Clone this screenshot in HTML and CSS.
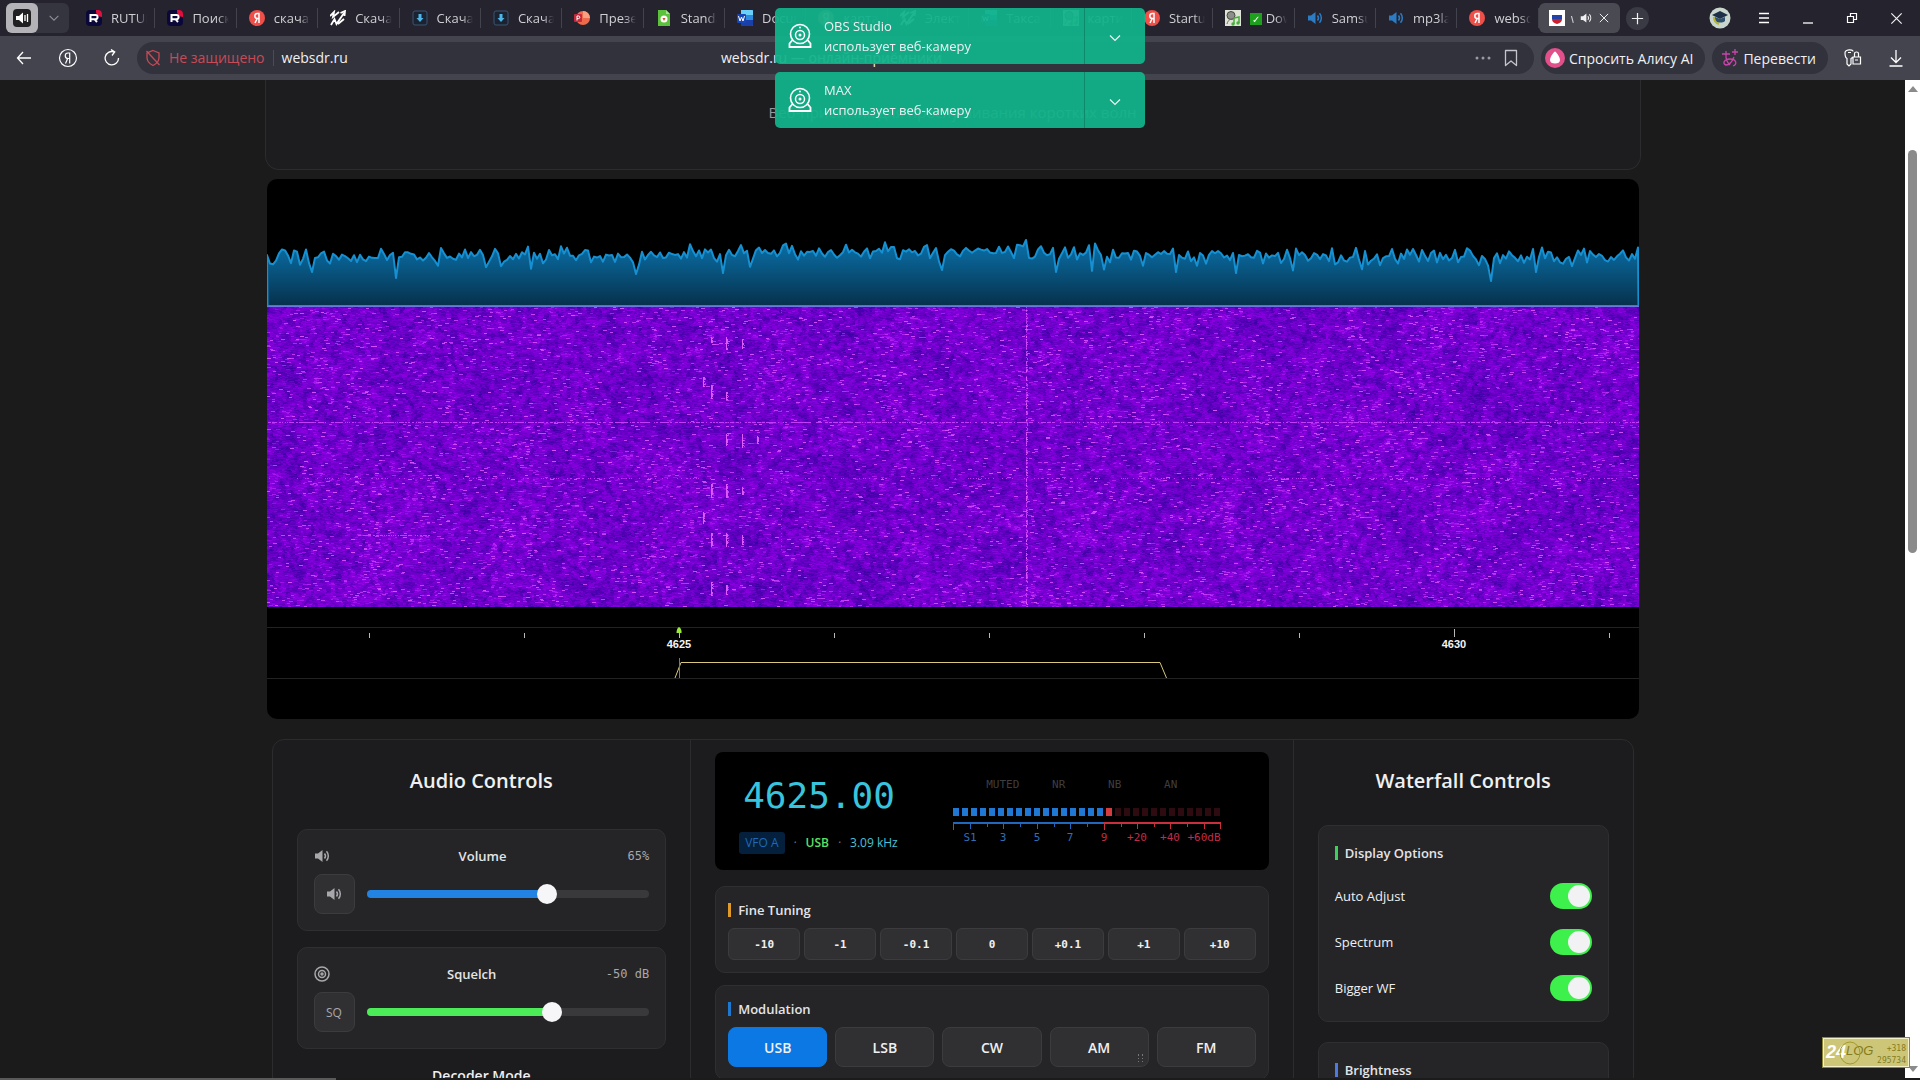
FILE: index.html
```html
<!DOCTYPE html>
<html lang="ru">
    <head>
        <meta charset="utf-8" />
        <meta name="viewport" content="width=device-width, initial-scale=1" />
        <title>websdr.ru</title>
        <link rel="stylesheet" href="styles.css">
    </head>
    <body>
        <svg class="sprite" aria-hidden="true">
            <symbol id="i-rutube" viewBox="0 0 16 16"><rect width="16" height="16" rx="4" fill="#0a0838" /><path d="M10 0h2a4 4 0 0 1 4 4v3a6 6 0 0 1-6-7z" fill="#e0103c" /><path d="M4.5 12V5h5a2 2 0 0 1 0 4.200h-5M8.500 9.200L11 12" fill="none" stroke="#fff" stroke-width="2" /></symbol>
            <symbol id="i-ya" viewBox="0 0 16 16"><circle cx="8" cy="8" r="8" fill="#ee4f48" /><path d="M10 13V3.500H8.300a2.500 2.500 0 0 0 0 5H10M8.200 8.500L6 13" fill="none" stroke="#fff" stroke-width="1.500" /></symbol>
            <symbol id="i-zig" viewBox="0 0 16 16"><path d="M0 6l4-4-1 5 6-5M1 15l3.500-6 2 5L14 3M10.500 3L15 1l-.5 5M8 14l6-5" fill="none" stroke="#fff" stroke-width="1.800" /></symbol>
            <symbol id="i-dl" viewBox="0 0 16 16"><rect x="1" y="1" width="14" height="14" rx="2" fill="#1b2330" stroke="#3a5474" /><path d="M8 4v5" stroke="#4fb4e6" stroke-width="3" /><path d="M4.500 8h7L8 12z" fill="#4fb4e6" /></symbol>
            <symbol id="i-ppt" viewBox="0 0 16 16"><circle cx="9" cy="8" r="7" fill="#ee6a4a" /><path d="M9 1a7 7 0 0 1 7 7H9z" fill="#f7a184" /><rect y="4" width="8" height="8" rx="1" fill="#c22a3c" /><path d="M3 10.500V6h1.500a1.300 1.300 0 0 1 0 2.600H3" fill="none" stroke="#fff" /></symbol>
            <symbol id="i-sheet" viewBox="0 0 16 16"><path d="M2 0h8l4 4v12H2z" fill="#5cc23c" /><path d="M10 0l4 4h-4z" fill="#a8e293" /><circle cx="8" cy="9" r="3.500" fill="#fff" /><path d="M6.500 8h3L8 11z" fill="#d0502c" /></symbol>
            <symbol id="i-word" viewBox="0 0 16 16"><rect x="4" y="0" width="12" height="16" rx="1" fill="#2c8be0" /><path d="M4 0h11a1 1 0 0 1 1 1v4H4z" fill="#6ad0f8" /><path d="M4 10h12v5a1 1 0 0 1-1 1H4z" fill="#1b3fa8" /><rect y="4" width="9" height="9" rx="1" fill="#1746b8" /><path d="M1.500 6l1.500 5 1.500-4L6 11l1.500-5" fill="none" stroke="#fff" /></symbol>
            <symbol id="i-img" viewBox="0 0 16 16"><path d="M0 0h16v16H0z" fill="#dfe3d8" /><circle cx="6" cy="5.500" r="4" fill="#8c9088" stroke="#44483f" /><path d="M2 14c1-4 3-5 6-5" fill="none" stroke="#6c7068" /><path d="M9 14V8l5-1v6" fill="none" stroke="#46b03a" stroke-width="1.500" /><circle cx="8" cy="14" r="1.700" fill="#46b03a" /><circle cx="13" cy="13" r="1.700" fill="#46b03a" /></symbol>
            <symbol id="i-snd" viewBox="0 0 16 16"><path d="M1 5.500h3L8.500 2v12L4 10.500H1z" fill="currentColor" /><path d="M10.500 5.500a4 4 0 0 1 0 5M12.500 3.300a7 7 0 0 1 0 9.400" fill="none" stroke="currentColor" stroke-width="1.500" /></symbol>
            <symbol id="i-flag" viewBox="0 0 16 16"><path d="M0 0h16v16H0z" fill="#fff" /><path d="M3 5h10v4H3z" fill="#2343a8" /><path d="M3 9h10c0 3-2 4-5 5-3-1-5-2-5-5z" fill="#c8202c" /></symbol>
            <symbol id="i-down" viewBox="0 0 16 16"><path d="M3 5.500l5 5 5-5" fill="none" stroke="currentColor" stroke-width="1.200" /></symbol>
            <symbol id="i-close" viewBox="0 0 16 16"><path d="M2.500 2.500l11 11m0-11l-11 11" fill="none" stroke="currentColor" stroke-width="1.300" /></symbol>
            <symbol id="i-plus" viewBox="0 0 16 16"><path d="M8 2v12M2 8h12" stroke="currentColor" stroke-width="1.300" /></symbol>
            <symbol id="i-cam" viewBox="0 0 24 26"><circle cx="12" cy="11" r="9.500" fill="none" stroke="#fff" stroke-width="1.600" /><circle cx="12" cy="12" r="4.500" fill="none" stroke="#fff" stroke-width="1.500" /><circle cx="12" cy="12" r="1.500" fill="#fff" /><circle cx="12" cy="4.500" r="1" fill="#fff" /><path d="M4.500 17L1.500 20.500V24h21v-3.500L19.500 17" fill="none" stroke="#fff" stroke-width="1.800" /></symbol>
        </svg>

        <header class="browser">
            <div class="tabbar">
                <div class="sound-group">
                    <button class="sound-btn" aria-label="Звук"><svg width="18" height="18" viewBox="0 0 18 18"><rect width="18" height="18" rx="4" fill="#202022" /><path d="M3 7h3l4-3.500v11L6 11H3z" fill="#fff" /><path d="M12 6v6M14.500 5v8" stroke="#fff" stroke-width="1.300" /></svg></button>
                    <button class="sound-more" aria-label="Список вкладок"><svg width="14" height="14"><use href="#i-down" /></svg></button>
                </div>
                <nav class="tabs">
                    <a class="tab" href="#"><svg><use href="#i-rutube" /></svg><span>RUTUBE</span></a>
                    <a class="tab" href="#"><svg><use href="#i-rutube" /></svg><span>Поиск ви</span></a>
                    <a class="tab" href="#"><svg><use href="#i-ya" /></svg><span>скачать</span></a>
                    <a class="tab" href="#"><svg><use href="#i-zig" /></svg><span>Скачать</span></a>
                    <a class="tab" href="#"><svg><use href="#i-dl" /></svg><span>Скачать</span></a>
                    <a class="tab" href="#"><svg><use href="#i-dl" /></svg><span>Скачать</span></a>
                    <a class="tab" href="#"><svg><use href="#i-ppt" /></svg><span>Презента</span></a>
                    <a class="tab" href="#"><svg><use href="#i-sheet" /></svg><span>Standard</span></a>
                    <a class="tab" href="#"><svg><use href="#i-word" /></svg><span>Docume</span></a>
                    <a class="tab" href="#"><svg><use href="#i-ya" /></svg><span>карта</span></a>
                    <a class="tab" href="#"><svg><use href="#i-zig" /></svg><span>Элект</span></a>
                    <a class="tab" href="#"><svg><use href="#i-word" /></svg><span>Такса</span></a>
                    <a class="tab" href="#"><svg><use href="#i-img" /></svg><span>карти</span></a>
                    <a class="tab" href="#"><svg><use href="#i-ya" /></svg><span>Startup</span></a>
                    <a class="tab" href="#"><svg><use href="#i-img" /></svg><span><i class="tick">✓</i> Downl</span></a>
                    <a class="tab blue" href="#"><svg><use href="#i-snd" /></svg><span>Samsung</span></a>
                    <a class="tab blue" href="#"><svg><use href="#i-snd" /></svg><span>mp3lame</span></a>
                    <a class="tab" href="#"><svg><use href="#i-ya" /></svg><span>websdr</span></a>
                    <a class="tab active" href="#"><svg><use href="#i-flag" /></svg><span>w</span><svg class="small"><use href="#i-snd" /></svg><svg class="small"><use href="#i-close" /></svg></a>
                </nav>
                <button class="new-tab" aria-label="Новая вкладка"><svg width="15" height="15"><use href="#i-plus" /></svg></button>
                <div class="window-btns">
                    <button aria-label="Профиль"><svg width="22" height="22" viewBox="0 0 22 22"><circle cx="11" cy="11" r="10.500" fill="#c9d6cd" /><path d="M3 8l8-4 8 4-8 4z" fill="#1d3048" /><path d="M6 10v4c2 2 8 2 10 0v-4l-5 2z" fill="#31506c" /><path d="M5 10c0 4 2 6 5 7" fill="none" stroke="#b4b62c" stroke-width="2" /></svg></button>
                    <button aria-label="Меню"><svg width="14" height="14" viewBox="0 0 14 14"><path d="M2 2.500h10M2 7h10M2 11.500h10" stroke="#fff" stroke-width="1.300" /></svg></button>
                    <button aria-label="Свернуть"><svg width="14" height="14" viewBox="0 0 14 14"><path d="M2 12h10" stroke="#fff" stroke-width="1.300" /></svg></button>
                    <button aria-label="Окно"><svg width="14" height="14" viewBox="0 0 14 14"><path d="M2.500 5.500h6v6h-6zM5.500 5.500v-3h6v6h-3" fill="none" stroke="#fff" stroke-width="1.200" /></svg></button>
                    <button aria-label="Закрыть"><svg width="15" height="15"><use href="#i-close" /></svg></button>
                </div>
            </div>
            <div class="toolbar">
                <div class="nav-btns">
                    <button aria-label="Назад"><svg width="18" height="18" viewBox="0 0 18 18"><path d="M16 9H3M8 3L2.500 9 8 15" fill="none" stroke="#fff" stroke-width="1.300" /></svg></button>
                    <button aria-label="Яндекс"><svg width="20" height="20" viewBox="0 0 20 20"><circle cx="10" cy="10" r="8.500" fill="none" stroke="#fff" stroke-width="1.200" /><path d="M11.700 15.500V5H10a2.600 2.600 0 0 0 0 5.500h1.700M9.700 10.500L7.500 15.500" fill="none" stroke="#fff" stroke-width="1.200" /></svg></button>
                    <button aria-label="Обновить"><svg width="18" height="18" viewBox="0 0 18 18"><path d="M15.500 9A6.700 6.700 0 1 1 11 2.900M8 .5l3.700 2.400L9 6.500" fill="none" stroke="#fff" stroke-width="1.300" /></svg></button>
                </div>
                <div class="address">
                    <div class="address-left">
                        <svg width="16" height="18" viewBox="0 0 16 18"><path d="M8 1.500l6 2.500v4.500c0 4-3 6.500-6 8-3-1.500-6-4-6-8V4zM1.500 2l13 14" fill="none" stroke="#c74a57" stroke-width="1.300" /></svg>
                        <span class="unsafe">Не защищено</span>
                        <span class="host">websdr.ru</span>
                    </div>
                    <span class="page-title">websdr.ru — онлайн-приёмники</span>
                    <div class="address-right">
                        <svg width="18" height="18" viewBox="0 0 18 18" fill="#9a9aa4"><circle cx="3" cy="9" r="1.500" /><circle cx="9" cy="9" r="1.500" /><circle cx="15" cy="9" r="1.500" /></svg>
                        <svg width="14" height="18" viewBox="0 0 14 18"><path d="M1.500 1.500h11v15L7 12l-5.500 4.500z" fill="none" stroke="#c4c4cb" stroke-width="1.300" stroke-linejoin="round" /></svg>
                    </div>
                </div>
                <button class="pill"><svg width="20" height="20" viewBox="0 0 20 20"><circle cx="10" cy="10" r="10" fill="#e2508c" /><path d="M10 3.500c2 1 5 6 5 8.500 0 2.500-2 3.500-5 3.500S5 14.500 5 12c0-2.500 3-7.500 5-8.500z" fill="#fff" /></svg>Спросить Алису AI</button>
                <button class="pill"><svg width="18" height="18" viewBox="0 0 18 18" fill="none" stroke="#c845a8" stroke-width="1.300"><path d="M1 5h8M5 2v6c0 4 2 6 4 8M13 8c-2 5-5 8-8 8-4-1-2-6 4-6s8 5 3 7M14 0v6M11 3h6" /></svg>Перевести</button>
                <div class="tool-btns">
                    <button aria-label="Пароли"><svg width="20" height="20" viewBox="0 0 20 20" fill="none" stroke="#fff" stroke-width="1.200"><path d="M9.500 9.500L8 10.500V16l-2 2-2-2v-5.500C2 9.500 2 7 2 5c0-4 8-4 8-1.500M5 4.500h3M11.500 9V5.500c0-2 4-2 4 0V9M10 9h7.500v7H10zM12 12h3" /></svg></button>
                    <button aria-label="Загрузки"><svg width="18" height="20" viewBox="0 0 18 20"><path d="M9 2v12M4 9.500L9 14.500 14 9.500M2.500 18h13" fill="none" stroke="#fff" stroke-width="1.300" /></svg></button>
                </div>
            </div>
        </header>

        <div class="viewport">
            <main>
                <section class="intro"><p>Веб-приёмник для прослушивания коротких волн</p></section>

                <section class="radio">
                    <canvas id="spectrum" class="spectrum"></canvas>
                    <canvas id="waterfall" class="waterfall"></canvas>
                    <svg class="scale" viewBox="0 0 1372 112">
                        <path d="M0 20.500h1372M0 71.500h1372" stroke="#222" />
                        <path d="M102.500 26v5M257.500 26v5M567.500 26v5M722.500 26v5M877.500 26v5M1032.500 26v5M1187.500 22v8M1342.500 26v5" stroke="#b8b8b8" />
                        <path d="M412 20c2 1 3 4 2.500 6H413v5h-1v-5h-2.500c0-2 .5-5 2.500-6z" fill="#9be83c" />
                        <text x="412" y="41">4625</text>
                        <text x="1187" y="41">4630</text>
                        <path d="M408 71l6-15.500h479l6.500 15.500" fill="none" stroke="#d8c878" />
                        <path d="M412.500 51v20" stroke="#8c7c28" />
                    </svg>
                </section>

                <section class="controls">
                    <div class="col audio">
                        <h2>Audio Controls</h2>
                        <div class="card slider-card">
                            <div class="card-head"><svg width="16" height="16"><use href="#i-snd" /></svg><label for="volume">Volume</label><output>65%</output></div>
                            <div class="slider-row">
                                <button class="square" aria-label="Mute"><svg width="16" height="16"><use href="#i-snd" /></svg></button>
                                <input type="range" id="volume" class="range-blue" min="0" max="100" value="65" style="--fill: 65%" />
                            </div>
                        </div>
                        <div class="card slider-card">
                            <div class="card-head"><svg width="16" height="16" viewBox="0 0 16 16" fill="none" stroke="currentColor" stroke-width="1.500"><circle cx="8" cy="8" r="7" /><circle cx="8" cy="8" r="3.500" /><circle cx="8" cy="8" r="1" /></svg><label for="squelch">Squelch</label><output>-50 dB</output></div>
                            <div class="slider-row">
                                <button class="square">SQ</button>
                                <input type="range" id="squelch" class="range-green" min="-150" max="0" value="-50" style="--fill: 67%" />
                            </div>
                        </div>
                        <h3 class="decoder">Decoder Mode</h3>
                    </div>

                    <div class="col tuner">
                        <div class="display">
                            <div>
                                <div class="freq">4625.00</div>
                                <div class="vfo"><span class="vfo-a">VFO A</span><i>·</i><span class="mode">USB</span><i>·</i><span class="bandwidth">3.09 kHz</span></div>
                            </div>
                            <div class="meter">
                                <div class="flags"><span>MUTED</span><span>NR</span><span>NB</span><span>AN</span></div>
                                <div class="bars" id="bars"></div>
                                <svg class="meter-scale" width="280" height="30" viewBox="0 0 280 30">
                                    <path d="M0 1h151M.5 1v7M17.500 1v6M34.500 1v4M50.500 1v6M67.500 1v4M84.500 1v6M101.500 1v4M117.500 1v6M134.500 1v4" stroke="#1f68bc" fill="none" />
                                    <path d="M151 1h117M151.500 1v7M168.500 1v4M184.500 1v6M201.500 1v4M217.500 1v6M234.500 1v4M251.500 1v6M267.500 1v6" stroke="#c8303e" fill="none" />
                                    <path d="M0 1h151" stroke="#1f68bc" stroke-width="2" />
                                    <path d="M151 1h117" stroke="#c8303e" stroke-width="2" />
                                    <g class="s-blue"><text x="17" y="19">S1</text><text x="50" y="19">3</text><text x="84" y="19">5</text><text x="117" y="19">7</text></g>
                                    <g class="s-red"><text x="151" y="19">9</text><text x="184" y="19">+20</text><text x="217" y="19">+40</text><text x="251" y="19">+60dB</text></g>
                                </svg>
                            </div>
                        </div>
                        <div class="card tuning">
                            <h3 class="bar-orange">Fine Tuning</h3>
                            <div class="steps">
                                <button>-10</button>
                                <button>-1</button>
                                <button>-0.1</button>
                                <button>0</button>
                                <button>+0.1</button>
                                <button>+1</button>
                                <button>+10</button>
                            </div>
                        </div>
                        <div class="card tuning">
                            <h3 class="bar-blue">Modulation</h3>
                            <div class="modes">
                                <button class="selected">USB</button>
                                <button>LSB</button>
                                <button>CW</button>
                                <button>AM<svg class="grip" width="6" height="9" viewBox="0 0 6 9" fill="#77777b"><path d="M0 0h1v2H0zM4 0h1v2H4zM0 4h1v1H0zM4 4h1v1H4zM0 7h1v1H0zM4 7h1v1H4z" /></svg></button>
                                <button>FM</button>
                            </div>
                        </div>
                    </div>

                    <div class="col wf">
                        <h2>Waterfall Controls</h2>
                        <div class="card options">
                            <h3 class="bar-green">Display Options</h3>
                            <label class="option">Auto Adjust<input type="checkbox" checked /></label>
                            <label class="option">Spectrum<input type="checkbox" checked /></label>
                            <label class="option">Bigger WF<input type="checkbox" checked /></label>
                        </div>
                        <div class="card options">
                            <h3 class="bar-indigo">Brightness</h3>
                        </div>
                    </div>
                </section>
            </main>
            <div class="scrollbar">
                <svg width="10" height="6"><path d="M0 6l5-6 5 6z" fill="#8b8b8b" /></svg>
                <div class="thumb-track"><div class="thumb"></div></div>
                <svg width="10" height="6"><path d="M0 0l5 6 5-6z" fill="#8b8b8b" /></svg>
            </div>
        </div>
        <footer class="edge"></footer>

        <div class="toasts">
            <div class="toast">
                <svg width="24" height="26"><use href="#i-cam" /></svg>
                <p>OBS Studio<br />использует веб-камеру</p>
                <button aria-label="Подробнее"><svg width="16" height="16"><use href="#i-down" /></svg></button>
            </div>
            <div class="toast">
                <svg width="24" height="26"><use href="#i-cam" /></svg>
                <p>MAX<br />использует веб-камеру</p>
                <button aria-label="Подробнее"><svg width="16" height="16"><use href="#i-down" /></svg></button>
            </div>
        </div>

        <a class="counter" href="#">
            <svg width="30" height="26" viewBox="0 0 30 26"><ellipse cx="15" cy="13" rx="10" ry="11" fill="none" stroke="#a39a2c" /></svg>
            <b>24</b><em>LOG</em>
            <span>+318<br />295734</span>
        </a>

        <script src="waterfall.js"></script>
    </body>
</html>
```

FILE: styles.css
```css
* {
    box-sizing: border-box;
}
body {
    margin: 0;
    height: 100vh;
    display: flex;
    flex-direction: column;
    overflow: hidden;
    background: #1b1b1b;
    color: #f0f0f2;
    font: 13px "Open Sans", "Noto Sans", sans-serif;
}
button {
    font: inherit;
    color: inherit;
    background: none;
    border: 0;
    padding: 0;
    display: flex;
    align-items: center;
    justify-content: center;
}
a {
    color: inherit;
    text-decoration: none;
}
h2,
h3,
p {
    margin: 0;
}
svg {
    flex: none;
}
.sprite {
    display: none;
}

/* browser chrome */
.browser {
    background: #44444e;
}
.tabbar {
    display: flex;
    align-items: center;
    height: 36px;
    padding: 0 12px 0 6px;
    background: #24232e;
}
.sound-group {
    display: flex;
    width: 63px;
    height: 30px;
    margin-right: 5px;
    border-radius: 6px;
    background: #353540;
}
.sound-btn {
    width: 32px;
    border-radius: 6px;
    background: #b4b4b8;
}
.sound-more {
    flex: 1;
    color: #8f8f98;
}
.tabs {
    display: flex;
    flex: 1;
    max-width: 1546px;
}
.tab {
    flex: 1;
    min-width: 0;
    height: 30px;
    display: flex;
    align-items: center;
    gap: 9px;
    padding: 0 8px 0 12px;
    color: #cfcfd4;
}
.tab svg {
    width: 16px;
    height: 16px;
}
.tab span {
    flex: 1;
    overflow: hidden;
    white-space: nowrap;
    mask-image: linear-gradient(to right, #000 70%, transparent);
}
.tab:not(.active) {
    background: linear-gradient(#43434d, #43434d) right center / 1px 20px no-repeat;
}
.tab.blue svg {
    color: #2c7cc4;
}
.tab.active {
    background: #4a4a52;
    border-radius: 6px;
    gap: 6px;
    padding: 0 10px;
}
.tab.active .small {
    width: 12px;
    height: 12px;
    color: #f0f0f2;
}
.tick {
    display: inline-block;
    width: 12px;
    line-height: 12px;
    background: #1ea01e;
    color: #fff;
    font-size: 10px;
    font-style: normal;
    text-align: center;
}
.new-tab {
    width: 23px;
    height: 23px;
    margin-left: 6px;
    border-radius: 50%;
    background: #3a3a44;
}
.window-btns {
    display: flex;
    margin-left: auto;
}
.window-btns button {
    width: 24px;
    margin-left: 20px;
}
.toolbar {
    display: flex;
    align-items: center;
    gap: 7px;
    height: 44px;
    padding-right: 15px;
}
.nav-btns {
    display: flex;
    gap: 24px;
    padding: 0 8px 0 14px;
}
.nav-btns button {
    width: 20px;
}
.address {
    flex: 1;
    display: grid;
    grid-template-columns: 1fr auto 1fr;
    align-items: center;
    height: 32px;
    padding: 0 16px 0 8px;
    border-radius: 16px;
    background: #32323c;
    font-size: 14px;
    line-height: 20px;
}
.address-left,
.address-right {
    display: flex;
    align-items: center;
    gap: 8px;
}
.address-right {
    justify-content: flex-end;
    gap: 12px;
}
.unsafe {
    color: #c74a57;
    padding-right: 8px;
    border-right: 1px solid #4c4c56;
    line-height: 16px;
}
.pill {
    gap: 4px;
    height: 32px;
    padding: 0 12px 0 4px;
    border-radius: 16px;
    background: #32323c;
    font-size: 14px;
}
.pill + .pill {
    padding-left: 9px;
}
.tool-btns {
    display: flex;
    gap: 24px;
    padding-left: 8px;
}

/* page */
.viewport {
    flex: 1;
    min-height: 0;
    display: flex;
}
main {
    flex: 1;
    overflow: hidden;
}
.intro,
.radio,
.controls {
    margin: 0 auto;
}
.intro {
    max-width: 1376px;
    height: 90px;
    padding-top: 22px;
    border: 1px solid #2c2c2e;
    border-top: 0;
    border-radius: 0 0 14px 14px;
    background: #1d1d1f;
    color: #98989d;
    font-size: 15px;
    line-height: 20px;
    text-align: center;
}
.radio {
    max-width: 1372px;
    margin-top: 9px;
    border-radius: 10px;
    overflow: hidden;
    background: #000;
}
.radio > * {
    display: block;
    width: 100%;
}
.spectrum {
    height: 128px;
}
.waterfall {
    height: 300px;
}
.scale {
    font: bold 11px "Liberation Sans", Arial, sans-serif;
    fill: #f4f4f4;
    text-anchor: middle;
}
.controls {
    max-width: 1362px;
    display: grid;
    grid-template-columns: 418fr 603fr 340fr;
    margin-top: 20px;
    border: 1px solid #2c2c2e;
    border-radius: 12px 12px 0 0;
    background: #1c1c1e;
}
.col {
    min-width: 0;
    padding: 24px;
}
.col + .col {
    border-left: 1px solid #2c2c2e;
}
.col h2 {
    margin-bottom: 27px;
    font-size: 20px;
    font-weight: 600;
    line-height: 34px;
    text-align: center;
}
.card {
    border: 1px solid #2f2f31;
    border-radius: 10px;
    background: #252527;
}
.card h3 {
    padding-left: 10px;
    font-size: 13px;
    font-weight: 600;
    line-height: 22px;
    color: #e4e4e7;
    background: linear-gradient(var(--bar), var(--bar)) left center / 3px 14px no-repeat;
}
.bar-orange {
    --bar: #e09a2a;
}
.bar-blue {
    --bar: #1f78d0;
}
.bar-green {
    --bar: #3ccf60;
}
.bar-indigo {
    --bar: #4f78e0;
}

/* audio */
.audio h2 {
    margin-bottom: 31px;
}
.slider-card {
    margin-bottom: 16px;
    padding: 16px;
}
.card-head {
    display: flex;
    align-items: center;
    justify-content: space-between;
    height: 20px;
    margin-bottom: 8px;
    color: #a8a8ac;
}
.card-head svg {
    margin-right: 8px;
}
.card-head label {
    color: #e4e4e7;
    font-weight: 600;
}
.card-head output {
    font: 12px "DejaVu Sans Mono", monospace;
}
.slider-row {
    display: flex;
    align-items: center;
    gap: 12px;
}
.square {
    width: 41px;
    height: 40px;
    flex: none;
    border: 1px solid #3c3c3f;
    border-radius: 8px;
    background: #303033;
    color: #a8a8ac;
    font-size: 12px;
}
input[type="range"] {
    appearance: none;
    flex: 1;
    min-width: 0;
    height: 20px;
    margin: 0;
    background: none;
}
input[type="range"]::-webkit-slider-runnable-track {
    height: 8px;
    border-radius: 4px;
    background: linear-gradient(to right, var(--track) var(--fill), #39393b var(--fill));
}
input[type="range"]::-webkit-slider-thumb {
    appearance: none;
    width: 20px;
    height: 20px;
    margin-top: -6px;
    border-radius: 50%;
    background: #f6f6f8;
}
.range-blue {
    --track: #2383e2;
}
.range-green {
    --track: #4cec58;
}
.decoder {
    font-size: 14px;
    font-weight: 600;
    line-height: 22px;
    text-align: center;
}

/* tuner */
.tuner {
    padding-top: 12px;
}
.display {
    display: flex;
    align-items: center;
    justify-content: space-between;
    height: 118px;
    margin-bottom: 16px;
    padding: 4px 36px 0 24px;
    border-radius: 8px;
    background: #000;
}
.freq {
    padding-left: 4px;
    margin-bottom: 12px;
    color: #38c4dc;
    font: 36px/48px "DejaVu Sans Mono", monospace;
}
.vfo {
    display: flex;
    align-items: center;
    gap: 9px;
    font-size: 12px;
    line-height: 22px;
}
.vfo i {
    color: #77777b;
}
.vfo-a {
    padding: 0 6px;
    border-radius: 3px;
    background: #04203c;
    color: #1f68bc;
}
.mode {
    color: #5ce065;
    font-weight: 600;
}
.bandwidth {
    color: #4ac0dc;
}
.meter {
    width: 280px;
    padding-top: 4px;
    font: 11px "DejaVu Sans Mono", monospace;
}
.flags {
    display: grid;
    grid-template-columns: repeat(4, 56px);
    padding-left: 22px;
    margin-bottom: 16px;
    color: #3e3e40;
    line-height: 14px;
    text-align: center;
}
.bars {
    display: flex;
    gap: 3px;
    height: 8px;
    margin-bottom: 6px;
}
.bars i {
    width: 6px;
    background: #1f78d4;
}
.bars .peak {
    background: #d43c40;
}
.bars .off {
    background: #2e0b10;
}
.meter-scale {
    display: block;
    text-anchor: middle;
}
.s-blue {
    fill: #2f6fb4;
}
.s-red {
    fill: #c02c48;
}
.tuning {
    margin-bottom: 12px;
    padding: 12px;
}
.tuning h3 {
    margin-bottom: 7px;
}
.steps,
.modes {
    display: grid;
    grid-auto-flow: column;
    grid-auto-columns: 1fr;
    gap: 4px;
}
.modes {
    gap: 8px;
}
.steps button,
.modes button {
    height: 32px;
    border: 1px solid #3c3c3f;
    border-radius: 6px;
    background: #303032;
    font: bold 11px "DejaVu Sans Mono", monospace;
}
.modes button {
    position: relative;
    height: 40px;
    border-radius: 8px;
    font: 600 14px "Open Sans", sans-serif;
}
.modes .selected {
    border-color: #0c78e4;
    background: #0c78e4;
}
.grip {
    position: absolute;
    right: 4px;
    bottom: 3px;
}

/* waterfall options */
.options {
    margin-bottom: 20px;
    padding: 16px 16px 10px;
}
.options h3 {
    margin-bottom: 9px;
}
.option {
    display: flex;
    align-items: center;
    justify-content: space-between;
    height: 46px;
}
.option input {
    appearance: none;
    display: flex;
    justify-content: flex-end;
    width: 42px;
    height: 26px;
    margin: 0;
    padding: 2px;
    border-radius: 13px;
    background: #3df04c;
}
.option input::before {
    content: "";
    width: 22px;
    height: 22px;
    border-radius: 50%;
    background: #f2f2f4;
}

.scrollbar {
    width: 15px;
    display: flex;
    flex-direction: column;
    align-items: center;
    gap: 6px;
    padding: 6px 0;
    background: #fff;
}
.thumb-track {
    flex: 1;
    width: 9px;
    padding: 52px 0;
}
.thumb {
    height: 47%;
    border-radius: 5px;
    background: #8b8b8b;
}
.edge {
    height: 2px;
    background: linear-gradient(to right, #5a5a5a 336px, #1b1b1b 336px);
}

/* overlays */
.toasts {
    position: fixed;
    top: 8px;
    left: 50%;
    width: 370px;
    margin-left: -185px;
    display: grid;
    gap: 8px;
}
.toast {
    display: flex;
    align-items: center;
    height: 56px;
    padding-left: 13px;
    border-radius: 5px;
    background: rgba(18, 178, 138, 0.95);
}
.toast p {
    flex: 1;
    padding-left: 12px;
    font-size: 13px;
    line-height: 20px;
}
.toast button {
    width: 61px;
    height: 56px;
    padding-top: 4px;
    border-left: 1px solid #0e8a6a;
}
.counter {
    position: fixed;
    right: 10px;
    bottom: 12px;
    display: flex;
    align-items: center;
    width: 88px;
    height: 31px;
    padding: 0 3px;
    border: 1px solid #8c8638;
    outline: 1px solid #f4f0c8;
    outline-offset: -2px;
    background: #cdc678;
    color: #857c1c;
}
.counter svg {
    position: absolute;
    left: 12px;
}
.counter b,
.counter em {
    font: italic bold 18px "Liberation Sans", sans-serif;
    color: #fff;
}
.counter em {
    font-size: 13px;
    font-weight: normal;
    color: #857c1c;
    padding-bottom: 5px;
}
.counter span {
    flex: 1;
    font: 8px/12px "DejaVu Sans Mono", monospace;
    padding-top: 4px;
    text-align: right;
}
```

FILE: waterfall.js
```js
let seed = 4625;
function rnd() {
    seed = (seed * 1664525 + 1013904223) >>> 0;
    return seed / 4294967296;
}

function fit(canvas) {
    canvas.width = canvas.clientWidth;
    canvas.height = canvas.clientHeight;
    return canvas.getContext('2d');
}

function drawSpectrum() {
    const canvas = document.getElementById('spectrum');
    const ctx = fit(canvas);
    const w = canvas.width;
    const h = canvas.height;
    // x: depth of the deepest notches
    const dips = { 44: 93, 128: 99, 370: 95, 457: 94, 675: 91, 788: 93, 826: 92, 908: 93, 970: 94, 1224: 102, 1270: 93 };
    const fill = ctx.createLinearGradient(0, 65, 0, h);
    fill.addColorStop(0, '#0a6ea6');
    fill.addColorStop(1, '#06304a');

    ctx.beginPath();
    ctx.moveTo(0.5, h - 1);
    for (let x = 0; x <= w; x += 3) {
        // band noise, slightly stronger in the middle
        let y = 78 - 6 * Math.exp(-Math.pow((x - 640) / 280, 2)) + (rnd() + rnd() - 1) * 10;
        if (rnd() > 0.92) y += 8;
        for (const d in dips) if (Math.abs(x - d) < 2) y = dips[d];
        if (Math.abs(x - 758) < 2) y = 61;
        ctx.lineTo(x, y);
    }
    ctx.lineTo(w - 0.5, h - 1);
    ctx.closePath();
    ctx.fillStyle = fill;
    ctx.fill();
    ctx.strokeStyle = '#1790d2';
    ctx.lineWidth = 2;
    ctx.lineJoin = 'round';
    ctx.stroke();
    ctx.fillStyle = '#6a78e0';
    ctx.fillRect(0, h - 1, w, 1);
}

function drawWaterfall() {
    const canvas = document.getElementById('waterfall');
    const ctx = fit(canvas);
    const w = canvas.width;
    const h = canvas.height;
    const img = ctx.createImageData(w, h);

    // smooth random field, bilinear between grid points
    function field(cell) {
        const cols = Math.ceil(w / cell) + 2;
        const grid = [];
        for (let i = 0; i < cols * (Math.ceil(h / cell) + 2); i++) grid.push(rnd() - 0.5);
        return function(x, y) {
            const gx = Math.floor(x / cell);
            const gy = Math.floor(y / cell);
            const fx = x / cell - gx;
            const fy = y / cell - gy;
            const i = gy * cols + gx;
            const top = grid[i] * (1 - fx) + grid[i + 1] * fx;
            const bottom = grid[i + cols] * (1 - fx) + grid[i + cols + 1] * fx;
            return top * (1 - fy) + bottom * fy;
        };
    }
    const fine = field(4);
    const wide = field(26);

    function put(x, y, v) {
        const i = (y * w + x) * 4;
        v = Math.max(0, Math.min(1, v));
        const hot = Math.max(0, v - 0.7) / 0.3;
        img.data[i] = 30 + v * 160 + hot * 50;
        img.data[i + 1] = hot * 110;
        img.data[i + 2] = 140 + v * 125;
        img.data[i + 3] = 255;
    }

    for (let y = 0; y < h; y++) {
        let left = 0;
        let v = 0;
        for (let x = 0; x < w; x++) {
            if (left-- <= 0) {
                left = 1 + Math.floor(rnd() * 2);
                const slow = wide(x, y);
                v = 0.5 + (rnd() - 0.5) * 0.26 + fine(x, y) * 0.4 + slow * 0.14;
                if (rnd() > 0.96 - slow * 0.05) {
                    v = 0.7 + rnd() * 0.22;
                    left += 1;
                }
            }
            put(x, y, v);
        }
    }

    // carrier and lightning crash
    for (let y = 0; y < h; y++) {
        if (rnd() > 0.3) put(759, y, 0.78 + rnd() * 0.2);
        if (rnd() > 0.6) put(760, y, 0.78 + rnd() * 0.15);
        if (rnd() > 0.85) put(514, y, 0.78);
    }
    for (let x = 0; x < w; x++) {
        if (rnd() > 0.35) put(x, 115, 0.86);
        if (rnd() > 0.8) put(x, 171, 0.84);
        if (x > 90 && x < 165 && rnd() > 0.4) put(x, 228, 0.86);
    }

    // buzzer pulses: x, y, length
    const pulses = [
        [444, 30, 6], [459, 30, 13], [475, 32, 10], [436, 70, 10], [444, 78, 14], [459, 85, 8],
        [459, 127, 12], [475, 127, 14], [490, 129, 8], [444, 177, 14], [459, 177, 14], [475, 180, 8],
        [436, 205, 12], [444, 226, 14], [459, 226, 14], [475, 228, 10], [444, 275, 14], [459, 278, 10]
    ];
    for (const [px, py, len] of pulses) {
        for (let y = py; y < py + len; y++) {
            put(px, y, 0.95);
            if (rnd() > 0.4) put(px + 1, y, 0.93);
            if (rnd() > 0.8) put(px + 2, y, 0.85);
        }
    }
    ctx.putImageData(img, 0, 0);
}

function drawMeter() {
    const bars = document.getElementById('bars');
    for (let i = 0; i < 30; i++) {
        const bar = document.createElement('i');
        if (i == 17) bar.className = 'peak';
        if (i > 17) bar.className = 'off';
        bars.appendChild(bar);
    }
}

drawMeter();
drawSpectrum();
drawWaterfall();
```
